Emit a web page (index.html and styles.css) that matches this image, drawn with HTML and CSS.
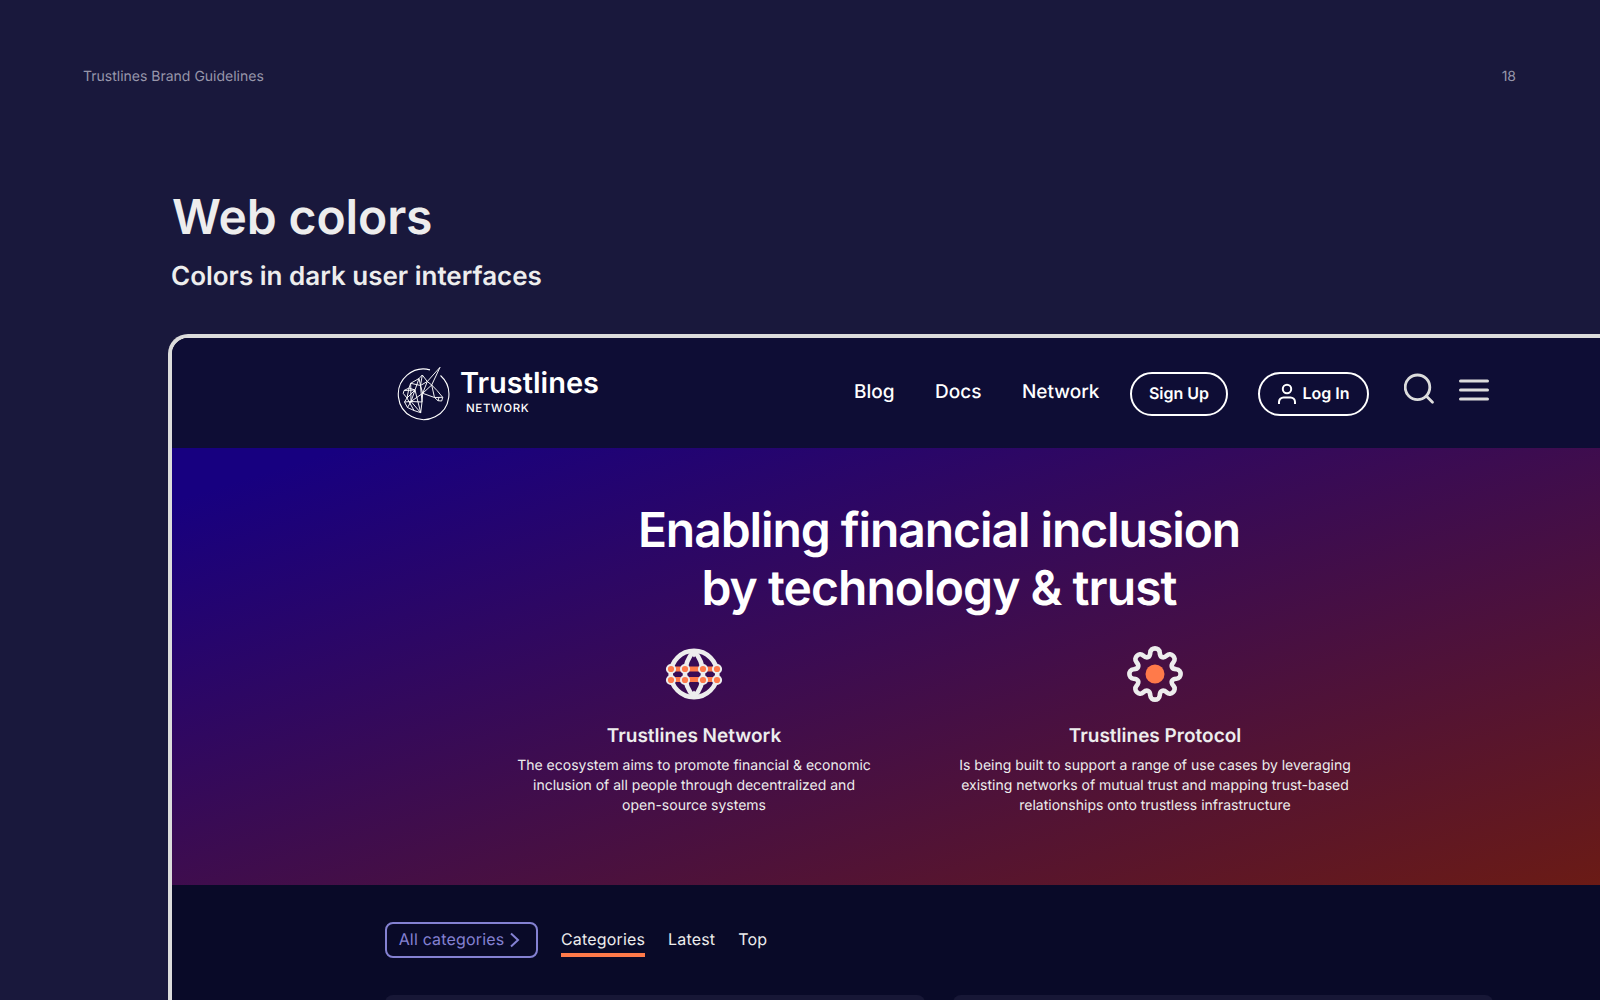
FILE: index.html
```html
<!DOCTYPE html>
<html lang="en">
<head>
<meta charset="utf-8">
<title>Trustlines Brand Guidelines</title>
<link rel="stylesheet" href="styles.css">
</head>
<body>
<div class="page">
  <header class="running-head"><span>Trustlines Brand Guidelines</span><span>18</span></header>
  <h1 class="title">Web colors</h1>
  <p class="subtitle">Colors in dark user interfaces</p>

  <main class="browser">
    <nav class="nav">
      <div class="brand">
        <svg class="brand-mark" width="54" height="56" viewBox="0 0 54 56" fill="none" stroke="#fff" stroke-linejoin="round">
          <path d="M33 4.850A25.300 25.300 0 1 0 43.500 10.500" stroke-width="1.100"/>
          <path d="M43 2.300 30.300 16.500 34.700 20Z M30.300 16.500 25.300 10 22 13.500 13.700 18.300 12 23 7 25.500 6.300 28.500 10 33 7.500 37 10.500 42.500 17 45.500 23.700 47.700 25 37 25.700 28.300 37.500 32.500 41 35.700 44.700 36 45.700 32.300 40 25.500 34.700 20 M25.300 10 23.500 20.500 30.300 16.500 25.700 28.300 34.700 20 37.500 32.500 45.700 32.300 M22 13.500 23.500 20.500 25.700 28.300 M13.700 18.300 23.500 20.500 M12 23 18 25 7 25.500 M22 13.500 18 25 10 33 17 45.500 M18 25 14 36.500 7.500 37 M14 36.500 25 37 23.500 20.500 M25.700 28.300 14 36.500 23.700 47.700 18 25 M13.700 18.300 14 36.500 M12 23 10 33 M14 36.500 10.500 42.500 M41 35.700 42 32.500" stroke-width=".950"/>
        </svg>
        <div class="brand-text"><strong class="brand-name">Trustlines</strong><span class="brand-sub">NETWORK</span></div>
      </div>
      <div class="links"><a>Blog</a><a>Docs</a><a>Network</a></div>
      <a class="pill signup"><span>Sign Up</span></a>
      <a class="pill login">
        <svg width="20" height="22" viewBox="0 0 20 22" fill="none" stroke="#fff" stroke-width="2"><circle cx="10" cy="6" r="4.200"/><path d="M2 21v-2a4.500 4.500 0 0 1 4.500-4.500h7a4.500 4.500 0 0 1 4.500 4.500v2"/></svg>
        <span>Log In</span>
      </a>
      <svg class="search" width="32" height="32" viewBox="0 0 32 32" fill="none" stroke="#dcdcdc" stroke-width="2.800" stroke-linecap="round"><circle cx="13.500" cy="14.300" r="12.300"/><path d="m22.500 23.300 6 6"/></svg>
      <svg class="menu" width="30" height="22" viewBox="0 0 30 22" fill="none" stroke="#dcdcdc" stroke-width="3" stroke-linecap="round"><path d="M1.500 2h27M1.500 11h27M1.500 20h27"/></svg>
    </nav>

    <section class="hero">
      <h2 class="hero-title">Enabling financial inclusion<br><span class="second-line">by technology &amp; trust</span></h2>
      <div class="features">
        <article class="feature network">
          <svg width="58" height="58" viewBox="0 0 58 58" fill="none">
            <g stroke="#ededed" stroke-width="4.600" stroke-linejoin="bevel"><circle cx="29" cy="29" r="23.300"/><path d="M29 6C17 19 17 39 29 52C41 39 41 19 29 6Z"/></g>
            <path d="M24 6.500h10l-5 6zM24 51.500h10l-5-6z" fill="#ededed"/>
            <path d="M6 24h46M6 34.500h46" stroke="#ff7a4a" stroke-width="5"/>
            <g fill="#ff7a4a" stroke="#ededed" stroke-width="2"><circle cx="6" cy="24" r="4.100"/><circle cx="20" cy="24" r="4.100"/><circle cx="38" cy="24" r="4.100"/><circle cx="52" cy="24" r="4.100"/><circle cx="6" cy="35" r="4.100"/><circle cx="20" cy="35" r="4.100"/><circle cx="38" cy="35" r="4.100"/><circle cx="52" cy="35" r="4.100"/></g>
          </svg>
          <h3>Trustlines Network</h3>
          <p>The ecosystem aims to promote financial &amp; economic<br>inclusion of all people through decentralized and<br>open-source systems</p>
        </article>
        <article class="feature protocol">
          <svg width="58" height="58" viewBox="-29 -29 58 58" fill="none">
            <path stroke="#ededed" stroke-width="4.600" stroke-linejoin="round" d="M-4.700-21.500C-4.500-27 4.500-27 4.700-21.500C5-16.500 8.130-15.200 11.880-18.530C15.910-22.270 22.270-15.910 18.530-11.880C15.200-8.130 16.500-5 21.500-4.700C27-4.500 27 4.500 21.500 4.700C16.500 5 15.200 8.130 18.530 11.880C22.270 15.910 15.910 22.270 11.880 18.530C8.130 15.200 5 16.500 4.700 21.500C4.500 27-4.500 27-4.700 21.500C-5 16.500-8.130 15.200-11.880 18.530C-15.910 22.270-22.270 15.910-18.530 11.880C-15.200 8.130-16.500 5-21.500 4.700C-27 4.500-27-4.500-21.500-4.700C-16.500-5-15.200-8.130-18.530-11.880C-22.270-15.910-15.910-22.270-11.880-18.530C-8.130-15.200-5-16.500-4.700-21.500Z"/>
            <circle r="9.500" fill="#ff7a4a"/>
          </svg>
          <h3>Trustlines Protocol</h3>
          <p>Is being built to support a range of use cases by leveraging<br>existing networks of mutual trust and mapping trust-based<br>relationships onto trustless infrastructure</p>
        </article>
      </div>
    </section>

    <section class="forum">
      <div class="tabs">
        <a class="filter"><span>All categories</span><svg width="10" height="16" viewBox="0 0 10 16" fill="none" stroke="#8481d2" stroke-width="2"><path d="m1 1.500 7 6.500-7 6.500"/></svg></a>
        <a class="tab active">Categories</a><a class="tab">Latest</a><a class="tab">Top</a>
      </div>
      <div class="cards"><div class="card"></div><div class="card"></div></div>
    </section>
  </main>
</div>
</body>
</html>
```

FILE: styles.css
```css
* { box-sizing: border-box; }
body { margin: 0; background: #19183c; font-family: Inter, "Liberation Sans", sans-serif; text-rendering: geometricPrecision; }
h1, h2, h3, p { margin: 0; }
.page { width: 1600px; height: 1000px; overflow: hidden; display: flex; flex-direction: column; color: #ededed; }
.running-head { display: flex; justify-content: space-between; padding: 67px 84px 0 83px; font-size: 14px; line-height: 20px; color: #9796aa; }
.title { margin: 101px 0 0 172px; font-size: 48px; line-height: 58px; font-weight: 600; letter-spacing: -0.1px; }
.subtitle { margin: 15px 0 0 171px; font-size: 26px; line-height: 32px; font-weight: 600; }
.browser { width: 1440px; height: 680px; margin: 41px 0 0 168px; flex: none; border: 4px solid #dcdcdc; border-right: 0; border-radius: 20px 0 0 0; background: #090a28; overflow: hidden; }
.nav { height: 110px; display: flex; align-items: flex-start; background: #0e0d35; color: #fff; }
.brand { width: 682px; padding: 27px 0 0 225px; display: flex; }
.brand-mark { flex: none; }
.brand-text { display: flex; flex-direction: column; padding-left: 9px; }
.brand-name { font-size: 29px; line-height: 36px; font-weight: 600; }
.brand-sub { font-size: 11.500px; line-height: 14px; padding: 0 0 0 6px; font-weight: 500; letter-spacing: 0.650px; }
.links { width: 276px; display: flex; gap: 40.500px; padding-top: 42px; font-size: 19px; line-height: 24px; font-weight: 450; letter-spacing: 0; }
.pill { height: 44px; margin-top: 34px; border: 2px solid #fff; border-radius: 22px; display: flex; align-items: center; justify-content: center; font-size: 16px; font-weight: 600; flex: none; }
.pill span { padding-bottom: 2px; }
.signup { width: 98px; }
.login { width: 111px; margin-left: 30px; gap: 5px; }
.search { margin: 35px 0 0 35px; flex: none; }
.menu { margin: 41px 0 0 23px; flex: none; }
.hero { height: 437px; padding-top: 53px; background: linear-gradient(to bottom right, #170080 0%, #170080 6%, #6b1b15 100%); }
.hero-title { width: 1534px; color: #fff; text-align: center; font-size: 48px; line-height: 58px; font-weight: 600; letter-spacing: -1.080px; }
.second-line { letter-spacing: -0.940px; }
.features { display: flex; padding: 28px 0 0 322px; gap: 21px; }
.feature { width: 400px; display: flex; flex-direction: column; align-items: center; text-align: center; }
.feature.protocol { width: 480px; }
.feature h3 { margin-top: 21px; font-size: 19px; line-height: 24px; font-weight: 600; }
.feature p { margin-top: 8px; font-size: 14px; line-height: 20px; white-space: nowrap; }
.forum { padding: 37px 0 0 213px; }
.tabs { display: flex; align-items: flex-start; gap: 23px; font-size: 16px; font-weight: 400; letter-spacing: 0.170px; line-height: 20px; }
.filter { width: 153px; height: 36px; border: 2px solid #8481d2; border-radius: 8px; color: #8481d2; display: flex; align-items: center; justify-content: center; gap: 6px; padding-right: 4px; }
.filter span { padding-bottom: 2px; }
.tab { padding-top: 7px; height: 35px; }
.active { border-bottom: 4px solid #ff7a4a; }
.cards { display: flex; gap: 28px; padding-top: 37px; }
.card { width: 540px; height: 100px; border-radius: 8px; background: #171736; flex: none; }
```
